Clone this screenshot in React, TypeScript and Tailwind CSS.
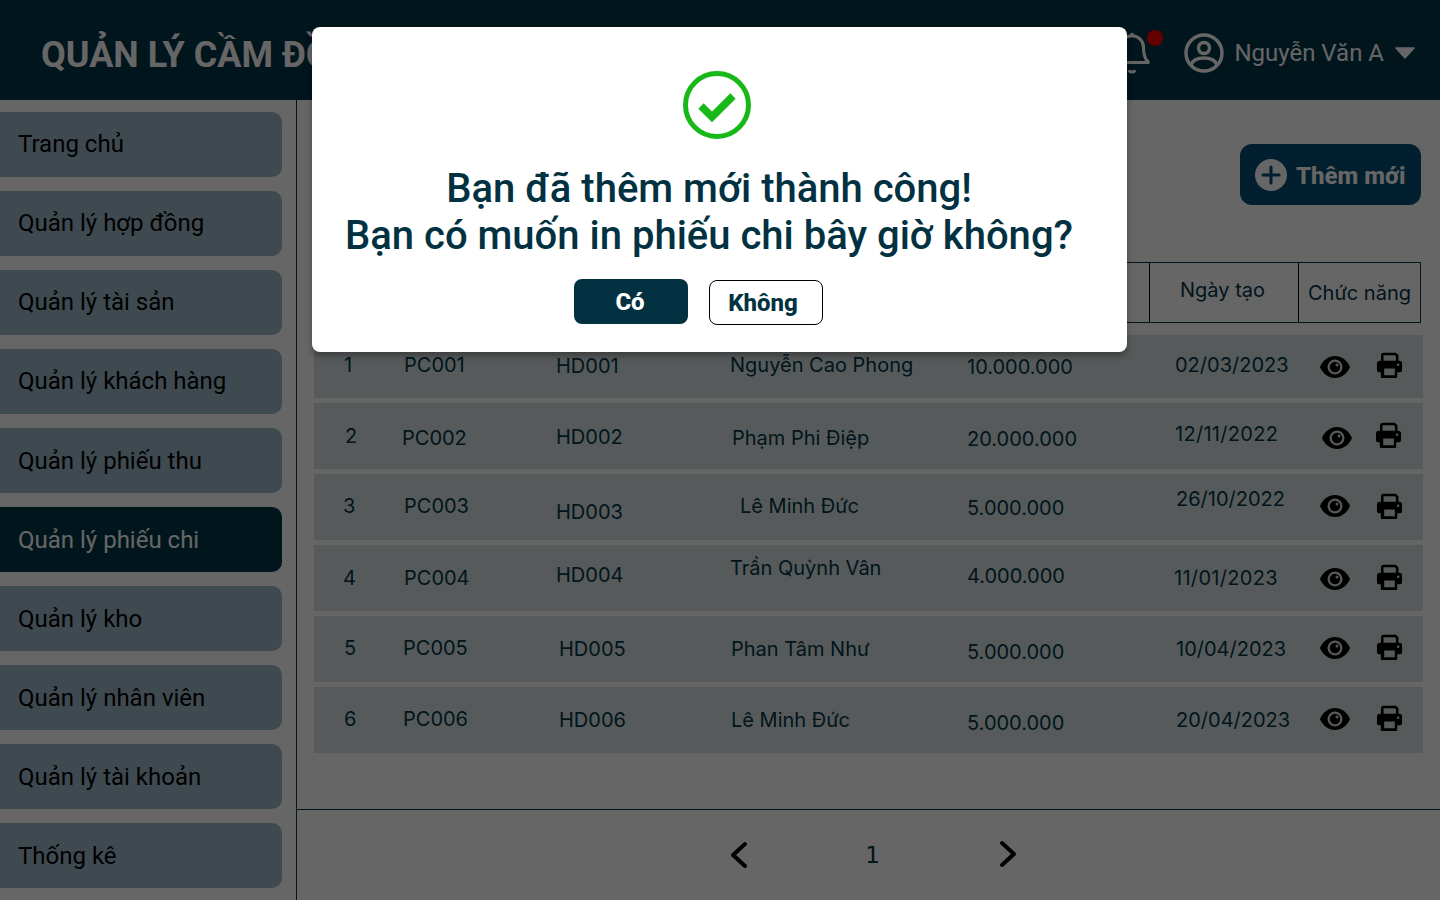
const menu = [
  { label: "Trang chủ", text: "pb-[2px]" },
  { label: "Quản lý hợp đồng", text: "pb-[2px]" },
  { label: "Quản lý tài sản", text: "pb-[2px]" },
  { label: "Quản lý khách hàng", text: "pb-[2px]" },
  { label: "Quản lý phiếu thu", text: "" },
  { label: "Quản lý phiếu chi", text: "" },
  { label: "Quản lý kho", text: "" },
  { label: "Quản lý nhân viên", text: "" },
  { label: "Quản lý tài khoản", text: "" },
  { label: "Thống kê", text: "" },
];

// the source design is hand placed, so each cell carries its own small nudge
const rows = [
  {
    id: "1",
    height: "h-[63px]",
    cells: [
      { text: "1", cls: "pl-[4px] pb-[3px]" },
      { text: "PC001", cls: "pl-[4px] pb-[3px]" },
      { text: "HD001", cls: "pl-[6px] pb-[1px]" },
      { text: "Nguyễn Cao Phong", cls: "pl-[5px] pb-[3px]" },
      { text: "10.000.000", cls: "pl-[7px] pt-[1px]" },
      { text: "02/03/2023", cls: "pl-[5px] pb-[3px]" },
    ],
    eye: "pl-[5px] pt-[1px]",
    printer: "pl-[6px] pb-[3px]",
  },
  {
    id: "2",
    height: "h-[66px]",
    cells: [
      { text: "2", cls: "pl-[5px]" },
      { text: "PC002", cls: "pl-[2px] pt-[4px]" },
      { text: "HD002", cls: "pl-[6px] pt-[2px]" },
      { text: "Phạm Phi Điệp", cls: "pl-[7px] pt-[4px]" },
      { text: "20.000.000", cls: "pl-[7px] pt-[6px]" },
      { text: "12/11/2022", cls: "pl-[5px] pb-[4px] tracking-[0.3px]" },
    ],
    eye: "pl-[7px] pt-[4px]",
    printer: "pl-[5px] pb-[2px]",
  },
  {
    id: "3",
    height: "h-[66px]",
    cells: [
      { text: "3", cls: "pl-[3px] pb-[2px]" },
      { text: "PC003", cls: "pl-[4px] pb-[2px]" },
      { text: "HD003", cls: "pl-[6px] pt-[10px]" },
      { text: "Lê Minh Đức", cls: "pl-[15px] pb-[2px]" },
      { text: "5.000.000", cls: "pl-[7px] pt-[2px]" },
      { text: "26/10/2022", cls: "pl-[6px] pb-[16px]" },
    ],
    eye: "pl-[5px] pb-[2px]",
    printer: "pl-[6px] pb-[2px]",
  },
  {
    id: "4",
    height: "h-[66px]",
    cells: [
      { text: "4", cls: "pl-[3px]" },
      { text: "PC004", cls: "pl-[4px]" },
      { text: "HD004", cls: "pl-[6px] pb-[6px]" },
      { text: "Trần Quỳnh Vân", cls: "pl-[5px] pb-[20px]" },
      { text: "4.000.000", cls: "pl-[7px] pb-[4px]" },
      { text: "11/01/2023", cls: "pl-[4px] tracking-[0.3px]" },
    ],
    eye: "pl-[5px] pt-[2px]",
    printer: "pl-[6px] pb-[2px]",
  },
  {
    id: "5",
    height: "h-[66px]",
    cells: [
      { text: "5", cls: "pl-[4px] pb-[2px]" },
      { text: "PC005", cls: "pl-[3px] pb-[2px]" },
      { text: "HD005", cls: "pl-[9px]" },
      { text: "Phan Tâm Như", cls: "pl-[6px]" },
      { text: "5.000.000", cls: "pl-[7px] pt-[6px]" },
      { text: "10/04/2023", cls: "pl-[6px]" },
    ],
    eye: "pl-[5px] pb-[2px]",
    printer: "pl-[6px] pb-[4px]",
  },
  {
    id: "6",
    height: "h-[66px]",
    cells: [
      { text: "6", cls: "pl-[4px] pb-[2px]" },
      { text: "PC006", cls: "pl-[3px] pb-[2px]" },
      { text: "HD006", cls: "pl-[9px]" },
      { text: "Lê Minh Đức", cls: "pl-[6px]" },
      { text: "5.000.000", cls: "pl-[7px] pt-[6px]" },
      { text: "20/04/2023", cls: "pl-[6px]" },
    ],
    eye: "pl-[5px] pb-[2px]",
    printer: "pl-[6px] pb-[4px]",
  },
];

function Eye() {
  return (
    <svg viewBox="0 0 30 22" className="block h-[22px] w-[30px]">
      <path
        fill="#000"
        fillRule="evenodd"
        d="M15 0C8.500 0 2.800 4.200 0 11c2.800 6.800 8.500 11 15 11s12.200-4.200 15-11C27.200 4.200 21.500 0 15 0Zm0 3.500a7.500 7.500 0 1 1 0 15 7.500 7.500 0 0 1 0-15Zm0 2.300a5.200 5.200 0 1 0 0 10.400 5.200 5.200 0 0 0 0-10.400Z"
      />
      <circle cx="17" cy="9" r="1.500" fill="#d9e2e2" />
    </svg>
  );
}

function Printer() {
  return (
    <svg viewBox="0 0 28 28" className="block h-[27px] w-[27px]">
      <path d="M6.500 10V3.500a1.500 1.500 0 0 1 1.500-1.500h12l2 2V10" fill="none" stroke="#000" strokeWidth="2.600" />
      <path
        fill="#000"
        fillRule="evenodd"
        d="M4 9h20a3 3 0 0 1 3 3v7a2 2 0 0 1-2 2h-3v5a1 1 0 0 1-1 1H6a1 1 0 0 1-1-1v-5H3a2 2 0 0 1-2-2v-7a3 3 0 0 1 3-3Zm4.500 8v7h11v-7h-11ZM23 12a1.300 1.300 0 1 0 0 2.600 1.300 1.300 0 0 0 0-2.600Z"
      />
    </svg>
  );
}

export default function App() {
  return (
    <div className="relative h-[900px] w-[1440px] overflow-hidden bg-white font-['Roboto',sans-serif]">
      <header className="flex h-[100px] items-center justify-between bg-[#023647] pt-[6px] pl-[41px] pr-[25px]">
        <h1 className="mt-[4px] text-[36px] font-bold whitespace-nowrap text-white">QUẢN LÝ CẦM ĐỒ</h1>
        <div className="flex items-center">
          <div className="relative mr-[29px] h-[46px] w-[46px]">
            <svg viewBox="0 0 24 24" className="h-[46px] w-[46px]" fill="none" stroke="#fff" strokeWidth="1.600">
              <path d="M6 9a6 6 0 0 1 12 0c0 7 3 8 3 8H3s3-1 3-8" />
              <path d="M12 3V1.500" />
              <path d="M10.300 21a2 2 0 0 0 3.400 0" />
            </svg>
            <span className="absolute top-0 left-[38px] h-[16px] w-[16px] rounded-full bg-[#ff0000]" />
          </div>
          <svg viewBox="0 0 40 40" className="h-[40px] w-[40px]" fill="none" stroke="#fff" strokeWidth="3.500">
            <circle cx="20" cy="20" r="18" />
            <circle cx="20" cy="15" r="5.500" />
            <path d="M7 32c2-6 8-7 13-7s11 1 13 7" />
          </svg>
          <span className="ml-[10px] text-[24px] text-white">Nguyễn Văn A</span>
          <svg viewBox="0 0 20 12" className="ml-[11px] h-[12px] w-[20px]">
            <path fill="#fff" stroke="#fff" strokeWidth="1.500" strokeLinejoin="round" d="M1 1h18L10 11Z" />
          </svg>
        </div>
      </header>

      <div className="flex h-[800px]">
        <aside className="flex w-[297px] shrink-0 flex-col gap-[14px] border-r border-[#023647] pt-[12px] pr-[14px]">
          {menu.map((item) => (
            <div
              key={item.label}
              className={
                item.label === "Quản lý phiếu chi"
                  ? "flex h-[65px] items-center rounded-r-[10px] bg-[#023647] pl-[18px] text-[24px] text-white"
                  : "flex h-[65px] items-center rounded-r-[10px] bg-[#9db9c8] pl-[18px] text-[24px] text-black"
              }
            >
              <span className={item.text}>{item.label}</span>
            </div>
          ))}
        </aside>

        <main className="flex flex-1 flex-col">
          <div className="flex h-[710px] flex-col border-b border-[#023647] pt-[44px] pl-[17px] pr-[17px]">
            <div className="flex justify-end pr-[2px]">
              <button className="flex h-[61px] w-[181px] items-center rounded-[12px] bg-[#034f75] pl-[15px] text-[24px] font-extrabold text-white">
                <svg viewBox="0 0 32 32" className="mr-[9px] h-[32px] w-[32px]">
                  <circle cx="16" cy="16" r="16" fill="#fff" />
                  <path d="M16 8v16M8 16h16" stroke="#034f75" strokeWidth="3" strokeLinecap="round" />
                </svg>
                <span className="pt-[2px]">Thêm mới</span>
              </button>
            </div>

            <div className="mt-[57px] flex h-[61px] items-center justify-end pr-[2px] font-['Inter',sans-serif] text-[20px] text-[#023647]">
              <div className="flex h-full w-[1107px] border border-[#023647]">
                <div className="h-full w-[834px]" />
                <div className="flex h-full w-[150px] items-center justify-center border-x border-black pr-[3px] pb-[5px]">Ngày tạo</div>
                <div className="flex h-full flex-1 items-center justify-center">Chức năng</div>
              </div>
            </div>

            <div className="mt-[12px] flex flex-col gap-[5px] font-['Inter',sans-serif] text-[20px] text-[#023647]">
              {rows.map((row) => (
                <div
                  key={row.id}
                  className={`grid grid-cols-[60px_150px_175px_235px_210px_145px_55px_1fr] items-center bg-[#d9e2e2] pl-[26px] ${row.height}`}
                >
                  {row.cells.map((cell) => (
                    <span key={cell.text} className={`whitespace-nowrap ${cell.cls}`}>{cell.text}</span>
                  ))}
                  <span className={row.eye}><Eye /></span>
                  <span className={row.printer}><Printer /></span>
                </div>
              ))}
            </div>
          </div>

          <div className="flex flex-1 items-center justify-center pl-[10px] text-[#023647]">
            <svg viewBox="0 0 18 28" className="h-[28px] w-[18px]" fill="none" stroke="#000" strokeWidth="4" strokeLinecap="round" strokeLinejoin="round">
              <path d="M15 3 3 14l12 11" />
            </svg>
            <span className="mr-[119px] ml-[117px] font-['DejaVu_Sans',sans-serif] text-[23px]">1</span>
            <svg viewBox="0 0 18 28" className="mb-[2px] h-[28px] w-[18px]" fill="none" stroke="#000" strokeWidth="4" strokeLinecap="round" strokeLinejoin="round">
              <path d="m3 3 12 11L3 25" />
            </svg>
          </div>
        </main>
      </div>

      <div className="absolute inset-0 bg-black/60" />

      <div className="absolute top-[27px] left-[312px] flex h-[325px] w-[815px] flex-col items-center rounded-[8px] bg-white pt-[44px] text-[#023141] shadow-[0_4px_6px_rgba(0,0,0,0.3)]">
        <svg viewBox="0 0 68 68" className="mr-[6px] h-[68px] w-[68px]" fill="none">
          <circle cx="34" cy="34" r="31.500" stroke="#17b817" strokeWidth="5" />
          <path d="M18 35l11 11 21-21" stroke="#17b817" strokeWidth="7.500" />
        </svg>
        <p className="mt-[26px] mr-[21px] text-center text-[40px] leading-[47px] font-medium">
          Bạn đã thêm mới thành công!
          <br />
          Bạn có muốn in phiếu chi bây giờ không?
        </p>
        <div className="mt-[20px] mr-[42px] flex items-start gap-[21px] text-[24px] font-extrabold">
          <button className="h-[45px] w-[114px] rounded-[8px] bg-[#023141] pr-[2px] text-white">Có</button>
          <button className="mt-[1px] h-[45px] w-[114px] rounded-[8px] border border-black bg-white pr-[6px]">Không</button>
        </div>
      </div>
    </div>
  );
}
